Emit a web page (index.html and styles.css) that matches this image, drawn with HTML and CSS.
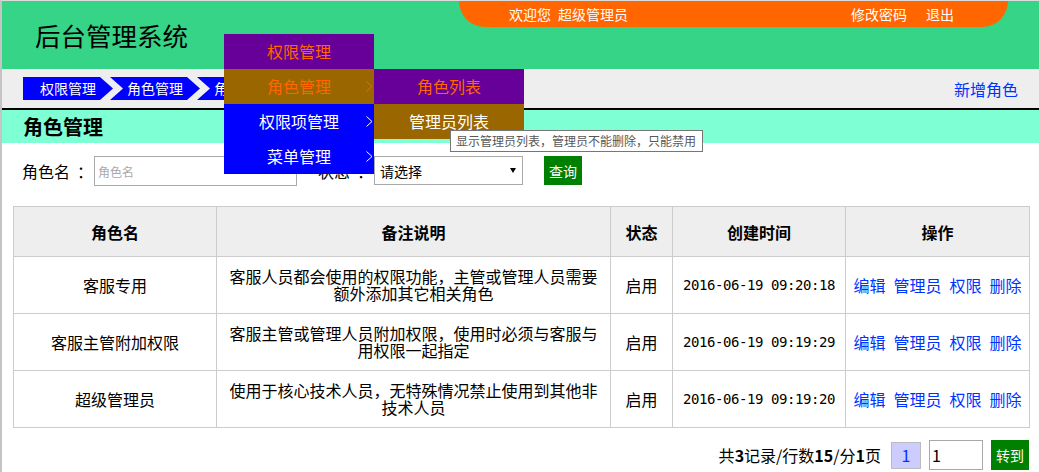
FILE: index.html
```html
<!DOCTYPE html>
<html lang="zh-CN">
<head>
<meta charset="utf-8">
<title>后台管理系统</title>
<link rel="stylesheet" href="styles.css">
</head>
<body>
<header class="top">
  <h1 class="brand">后台管理系统</h1>
  <div class="userbar">
    <span class="welcome">欢迎您</span><span class="uname">超级管理员</span>
    <a class="ulink ulink-first" href="#">修改密码</a>
    <a class="ulink" href="#">退出</a>
  </div>
</header>
<nav class="navbar">
  <div class="crumbs">
    <a class="crumb crumb-first" href="#">权限管理</a>
    <a class="crumb" href="#">角色管理</a>
    <a class="crumb" href="#">角色列表</a>
  </div>
  <a class="add" href="#">新增角色</a>
</nav>
<div class="section-title">角色管理</div>
<form class="search">
  <label class="lbl">角色名<span class="colon">：</span></label>
  <input class="txt" type="text" placeholder="角色名">
  <label class="lbl lbl-status">状态<span class="colon">：</span></label>
  <span class="sel-wrap"><select class="sel"><option>请选择</option></select></span>
  <button class="btn" type="button">查询</button>
</form>
<table class="grid">
  <colgroup>
    <col class="c1"><col class="c2"><col class="c3"><col class="c4"><col class="c5">
  </colgroup>
  <thead>
    <tr><th>角色名</th><th>备注说明</th><th>状态</th><th>创建时间</th><th>操作</th></tr>
  </thead>
  <tbody>
    <tr>
      <td>客服专用</td>
      <td class="desc">客服人员都会使用的权限功能，主管或管理人员需要额外添加其它相关角色</td>
      <td>启用</td>
      <td class="date">2016-06-19 09:20:18</td>
      <td class="opcell"><span class="ops"><a href="#">编辑</a><a href="#">管理员</a><a href="#">权限</a><a href="#">删除</a></span></td>
    </tr>
    <tr>
      <td>客服主管附加权限</td>
      <td class="desc">客服主管或管理人员附加权限，使用时必须与客服与用权限一起指定</td>
      <td>启用</td>
      <td class="date">2016-06-19 09:19:29</td>
      <td class="opcell"><span class="ops"><a href="#">编辑</a><a href="#">管理员</a><a href="#">权限</a><a href="#">删除</a></span></td>
    </tr>
    <tr>
      <td>超级管理员</td>
      <td class="desc">使用于核心技术人员，无特殊情况禁止使用到其他非技术人员</td>
      <td>启用</td>
      <td class="date">2016-06-19 09:19:20</td>
      <td class="opcell"><span class="ops"><a href="#">编辑</a><a href="#">管理员</a><a href="#">权限</a><a href="#">删除</a></span></td>
    </tr>
  </tbody>
</table>
<div class="pager">
  <span class="pinfo">共<b>3</b>记录/行数<b>15</b>/分<b>1</b>页</span>
  <span class="pcur">1</span>
  <input class="pinput" type="text" value="1">
  <button class="pgo" type="button">转到</button>
</div>

<ul class="menu">
  <li class="m m-purple">权限管理</li>
  <li class="m m-brown">角色管理<svg class="chev chev-orange" viewBox="0 0 7 11"><polyline points="0.5,0.5 6,5.5 0.5,10.5"/></svg>
    <ul class="sub">
      <li class="s s-purple">角色列表</li>
      <li class="s s-brown">管理员列表</li>
    </ul>
  </li>
  <li class="m m-blue">权限项管理<svg class="chev" viewBox="0 0 7 11"><polyline points="0.5,0.5 6,5.5 0.5,10.5"/></svg></li>
  <li class="m m-blue">菜单管理<svg class="chev" viewBox="0 0 7 11"><polyline points="0.5,0.5 6,5.5 0.5,10.5"/></svg></li>
</ul>
<div class="tooltip">显示管理员列表，管理员不能删除，只能禁用</div>
</body>
</html>
```

FILE: styles.css
```css
* { box-sizing: border-box; }
html, body { margin: 0; padding: 0; }
body {
  font-family: "Noto Sans CJK SC", sans-serif;
  font-size: 16px;
  color: #000;
  background: #fff;
  border-left: 2px solid #c4c4c4;
  border-top: 1px solid #dcdcdc;
  min-height: 100vh;
}
a { text-decoration: none; }

/* header */
.top {
  display: flex;
  align-items: flex-start;
  height: 68px;
  background: #35d487;
}
.brand {
  margin: 0;
  padding: 21px 0 0 33px;
  font-size: 25.5px;
  font-weight: normal;
  line-height: 26px;
}
.userbar {
  margin-left: auto;
  margin-right: 31px;
  width: 549px;
  height: 26px;
  background: #ff6600;
  border-radius: 0 0 26px 26px;
  display: flex;
  align-items: center;
  padding: 0 54px 0 50px;
  color: #fff;
  font-size: 14px;
  line-height: 26px;
}
.uname { margin-left: 7px; }
.ulink { color: #fff; margin-left: 19px; }
.ulink-first { margin-left: auto; }

/* nav */
.navbar {
  display: flex;
  align-items: center;
  height: 41px;
  background: #eee;
  border-bottom: 2px solid #000;
  padding: 0 21px;
}
.crumbs { display: flex; }
.crumb {
  width: 90px;
  height: 23px;
  line-height: 23px;
  background: #0000ff;
  color: #fff;
  font-size: 14px;
  text-align: center;
  margin-left: -3px;
  clip-path: polygon(0 0, 77px 0, 90px 50%, 77px 100%, 0 100%, 13px 50%);
}
.crumb-first {
  margin-left: 0;
  clip-path: polygon(0 0, 77px 0, 90px 50%, 77px 100%, 0 100%);
}
.add { margin-left: auto; color: #0033ff; font-size: 16px; }

.section-title {
  height: 33px;
  line-height: 33px;
  background: #7fffd4;
  padding-left: 21px;
  font-size: 20px;
  font-weight: bold;
}

/* search */
.search {
  display: flex;
  align-items: flex-start;
  margin: 13px 0 0 20px;
  height: 30px;
}
.lbl {
  width: 72px;
  font-size: 16px;
  line-height: 30px;
  white-space: nowrap;
}
.colon { margin-left: 7px; }
.lbl-status { margin-left: 21px; width: 56px; }
.txt {
  width: 203px;
  height: 30px;
  border: 1px solid #a9a9a9;
  padding: 0 3px;
  font-family: "Noto Sans CJK SC", sans-serif;
  font-size: 12px;
}
.txt::placeholder { color: #a9a9a9; }
.sel-wrap { position: relative; display: block; }
.sel {
  appearance: none;
  -webkit-appearance: none;
  width: 149px;
  height: 29px;
  border: 1px solid #a9a9a9;
  border-radius: 0;
  background: #fff;
  font-family: "Noto Sans CJK SC", sans-serif;
  font-size: 14px;
  padding: 0 0 0 5px;
  color: #000;
}
.sel-wrap::after {
  content: "";
  position: absolute;
  right: 7px;
  top: 12px;
  border-left: 3px solid transparent;
  border-right: 3px solid transparent;
  border-top: 5px solid #000;
}
.btn {
  margin-left: 21px;
  width: 38px;
  height: 29px;
  background: #008000;
  color: #fff;
  border: 0;
  padding: 0;
  font-family: "Noto Sans CJK SC", sans-serif;
  font-size: 14px;
}

/* table */
.grid {
  margin: 20px 0 0 11px;
  width: 1016px;
  border-collapse: collapse;
  table-layout: fixed;
  font-size: 16px;
}
.c1 { width: 203px; }
.c2 { width: 394px; }
.c3 { width: 62px; }
.c4 { width: 173px; }
.c5 { width: 184px; }
.grid th, .grid td {
  border: 1px solid #ccc;
  text-align: center;
  vertical-align: middle;
  padding: 0 10px;
}
.grid th {
  background: #eee;
  height: 50px;
  font-weight: bold;
}
.grid td {
  height: 57px;
  line-height: 17px;
}
.grid td.date {
  font-family: "DejaVu Sans Mono", monospace;
  font-size: 14px;
  letter-spacing: -0.43px;
  padding: 0;
}
.grid td.opcell { padding: 0; white-space: nowrap; }
.ops { display: inline-flex; gap: 8px; }
.ops a { color: #0033ff; }

/* pager */
.pager {
  display: flex;
  justify-content: flex-end;
  align-items: center;
  margin-top: 12px;
  padding-right: 10px;
  height: 30px;
}
.pinfo { font-size: 16px; margin-right: 10px; }
.pcur {
  width: 30px;
  height: 27px;
  line-height: 25px;
  background: #ccccff;
  border: 1px solid #bbb;
  color: #0033ff;
  text-align: center;
}
.pinput {
  margin-left: 8px;
  width: 54px;
  height: 30px;
  border: 1px solid #a9a9a9;
  padding: 0 0 0 2px;
  font-family: "Noto Sans CJK SC", sans-serif;
  font-size: 16px;
}
.pgo {
  margin-left: 8px;
  width: 38px;
  height: 30px;
  background: #008000;
  color: #fff;
  border: 0;
  padding: 0;
  font-family: "Noto Sans CJK SC", sans-serif;
  font-size: 14px;
}

/* dropdown menu overlay */
.menu, .sub {
  list-style: none;
  margin: 0;
  padding: 0;
  width: 150px;
  font-size: 16px;
}
.menu { position: absolute; left: 224px; top: 34px; }
.menu li {
  position: relative;
  height: 35px;
  line-height: 35px;
  text-align: center;
}
.sub { position: absolute; left: 150px; top: 0; }
.m-purple, .s-purple { background: #660099; color: #ff6600; }
.m-brown { background: #996600; color: #ff6600; }
.s-brown { background: #996600; color: #fff; }
.m-blue { background: #0000ff; color: #fff; }
.chev {
  position: absolute;
  right: 1px;
  top: 12px;
  width: 7px;
  height: 11px;
  fill: none;
  stroke: #fff;
  stroke-width: 1;
}
.chev-orange { stroke: #ff6600; }

.tooltip {
  position: absolute;
  left: 450px;
  top: 130px;
  width: 253px;
  height: 22px;
  border: 1px solid #767676;
  background: #fff;
  color: #575757;
  font-size: 12px;
  line-height: 20px;
  padding-left: 5px;
  white-space: nowrap;
}
```
